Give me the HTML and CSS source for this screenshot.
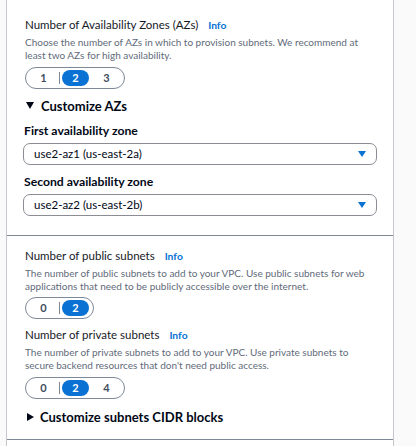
FILE: index.html
```html
<!DOCTYPE html>
<html>
<head>
<meta charset="utf-8">
<link rel="stylesheet" href="styles.css">
</head>
<body>
<div class="panel">
  <div class="section first">
    <div class="label">Number of Availability Zones (AZs) <a class="info">Info</a></div>
    <div class="desc">Choose the number of AZs in which to provision subnets. We recommend at least two AZs for high availability.</div>
    <div class="seg">
      <span class="opt">1</span><span class="sep"></span><span class="opt on">2</span><span class="opt">3</span>
    </div>
    <div class="expander"><span class="caret"></span>Customize AZs</div>
    <div class="blabel">First availability zone</div>
    <div class="select"><span>use2-az1 (us-east-2a)</span><span class="arrow"></span></div>
    <div class="blabel second">Second availability zone</div>
    <div class="select"><span>use2-az2 (us-east-2b)</span><span class="arrow"></span></div>
  </div>
  <div class="section last">
    <div class="label">Number of public subnets <a class="info">Info</a></div>
    <div class="desc">The number of public subnets to add to your VPC. Use public subnets for web applications that need to be publicly accessible over the internet.</div>
    <div class="seg">
      <span class="opt">0</span><span class="sep"></span><span class="opt on">2</span>
    </div>
    <div class="label spaced">Number of private subnets <a class="info">Info</a></div>
    <div class="desc">The number of private subnets to add to your VPC. Use private subnets to secure backend resources that don't need public access.</div>
    <div class="seg">
      <span class="opt">0</span><span class="sep"></span><span class="opt on">2</span><span class="opt">4</span>
    </div>
    <div class="expander cidr"><span class="caret right"></span>Customize subnets CIDR blocks</div>
  </div>
</div>
</body>
</html>
```
FILE: styles.css
```css
* { box-sizing: border-box; }
html, body { margin: 0; padding: 0; }
body {
  background: #fafafa;
  font-family: Lato, "Open Sans", sans-serif;
  color: #16191f;
  width: 416px;
  height: 446px;
  overflow: hidden;
}
.panel {
  margin-left: 6px;
  width: 388px;
  background: #fff;
  border-left: 1px solid #c6c6cd;
  border-right: 1px solid #c6c6cd;
  min-height: 446px;
}
.section {
  display: flex;
  flex-direction: column;
  align-items: flex-start;
  padding: 17px 16px 19px 18px;
  border-bottom: 1px solid #7d8998;
}
.section.last { padding-top: 12px; padding-bottom: 13px; }
.label {
  font-size: 11.5px;
  line-height: 16px;
  color: #16191f;
}
.label.spaced { margin-top: 8px; }
.info {
  color: #0972d3;
  font-weight: 700;
  font-size: 10.3px;
  margin-left: 7px;
}
.desc {
  font-size: 10px;
  line-height: 13px;
  color: #5f6b7a;
  margin-top: 3px;
  width: 345px;
}
.seg {
  display: flex;
  align-items: center;
  margin-top: 4.5px;
  height: 22px;
  border: 1px solid #7d8998;
  border-radius: 11px;
  padding: 0 2px 0 2px;
}
.opt {
  width: 27px;
  height: 16px;
  line-height: 16px;
  text-align: center;
  font-size: 11px;
  font-weight: 700;
  color: #414d5c;
  border-radius: 8px;
  margin: 0 2px;
}
.opt.on { background: #0972d3; color: #fff; }
.sep { width: 1px; height: 12px; background: #7d8998; }
.expander {
  font-size: 13px;
  font-weight: 700;
  line-height: 18px;
  display: flex;
  align-items: center;
  margin-top: 8px;
  color: #000716;
}
.expander.cidr { margin-top: 9px; }
.caret {
  width: 0; height: 0;
  border-left: 4px solid transparent;
  border-right: 4px solid transparent;
  border-top: 7px solid #000716;
  margin: 0 7px 0 1px;
}
.caret.right {
  border-top: 4px solid transparent;
  border-bottom: 4px solid transparent;
  border-left: 7px solid #000716;
  border-right: 0;
  margin: 0 6px 0 2px;
}
.blabel {
  font-size: 12.2px;
  font-weight: 700;
  line-height: 16px;
  margin-top: 8px;
  margin-left: -1px;
  color: #000716;
}
.blabel.second { margin-top: 9px; }
.select {
  display: flex;
  justify-content: space-between;
  align-items: center;
  width: 354px;
  height: 22px;
  margin-top: 4px;
  margin-left: -2px;
  border: 1px solid #8c8c94;
  border-radius: 7px;
  padding: 0 10px 0 10px;
  font-size: 11.5px;
  color: #000716;
}
.arrow {
  width: 0; height: 0;
  border-left: 4.5px solid transparent;
  border-right: 4.5px solid transparent;
  border-top: 6px solid #0972d3;
}
```
